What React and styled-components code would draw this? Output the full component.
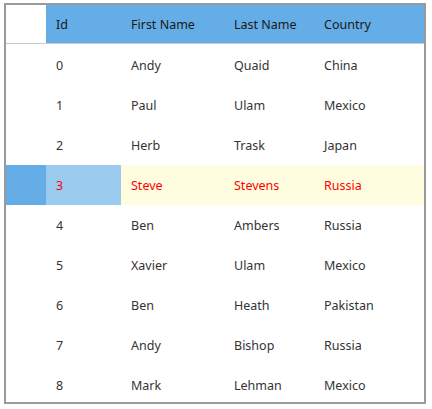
import React from "react";
import styled, { createGlobalStyle } from "styled-components";

const rows = [
  { id: 0, first: "Andy", last: "Quaid", country: "China" },
  { id: 1, first: "Paul", last: "Ulam", country: "Mexico" },
  { id: 2, first: "Herb", last: "Trask", country: "Japan" },
  { id: 3, first: "Steve", last: "Stevens", country: "Russia" },
  { id: 4, first: "Ben", last: "Ambers", country: "Russia" },
  { id: 5, first: "Xavier", last: "Ulam", country: "Mexico" },
  { id: 6, first: "Ben", last: "Heath", country: "Pakistan" },
  { id: 7, first: "Andy", last: "Bishop", country: "Russia" },
  { id: 8, first: "Mark", last: "Lehman", country: "Mexico" },
];

const selectedRow = 3;

export default function App() {
  return (
    <>
      <GlobalStyle />
      <Grid>
        <HeaderRow>
          <Corner />
          <HeaderCell>Id</HeaderCell>
          <HeaderCell>First Name</HeaderCell>
          <HeaderCell>Last Name</HeaderCell>
          <HeaderCell>Country</HeaderCell>
        </HeaderRow>
        <Body>
          {rows.map((r) => {
            const sel = r.id === selectedRow ? 1 : 0;
            return (
              <Row key={r.id}>
                <RowHeader selected={sel} />
                <Cell selected={sel} current={sel}>{r.id}</Cell>
                <Cell selected={sel}>{r.first}</Cell>
                <Cell selected={sel}>{r.last}</Cell>
                <Cell selected={sel}>{r.country}</Cell>
              </Row>
            );
          })}
        </Body>
      </Grid>
    </>
  );
}

const GlobalStyle = createGlobalStyle`
  body {
    margin: 0;
    padding: 3px 0 0 4px;
    background: #fff;
    font-family: "Noto Sans", "Open Sans", sans-serif;
  }
`;

const columns = "40px 75px 103px 90px 1fr";

const Grid = styled.div`
  width: 422px;
  height: 401px;
  box-sizing: border-box;
  border: 2px solid #9a9a9a;
  background: #fff;
  overflow: hidden;
`;

const HeaderRow = styled.div`
  display: grid;
  grid-template-columns: ${columns};
  height: 38px;
  border-bottom: 1px solid #c9c9c9;
`;

const Corner = styled.div`
  background: #fff;
`;

const HeaderCell = styled.div`
  display: flex;
  align-items: center;
  padding-left: 10px;
  background: #65ade6;
  color: #1a1a1a;
  font-size: 12.5px;
`;

const Body = styled.div`
  display: flex;
  flex-direction: column;
  padding-top: 1px;
`;

const Row = styled.div`
  display: grid;
  grid-template-columns: ${columns};
  height: 40px;
  flex-shrink: 0;
`;

const RowHeader = styled.div`
  background: ${(p) => (p.selected ? "#65ade6" : "#fff")};
`;

const Cell = styled.div`
  display: flex;
  align-items: center;
  padding-left: 10px;
  font-size: 12.5px;
  color: ${(p) => (p.selected ? "#ff0000" : "#333")};
  background: ${(p) => (p.current ? "#9bcaef" : p.selected ? "#fffddf" : "#fff")};
`;
